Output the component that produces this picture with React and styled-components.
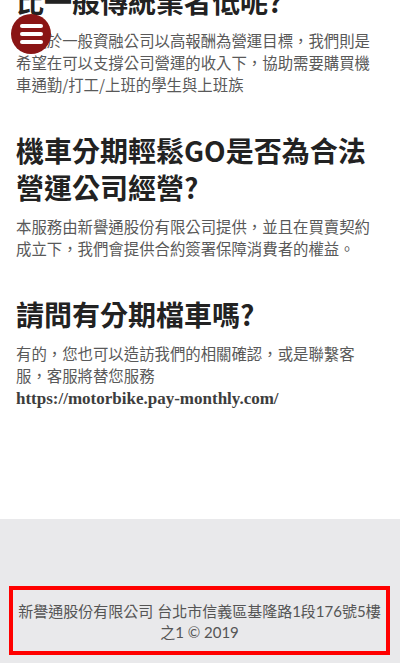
import React from 'react';
import styled, { createGlobalStyle } from 'styled-components';

const GlobalStyle = createGlobalStyle`
  html, body {
    margin: 0;
    padding: 0;
    background: #ffffff;
  }
  body {
    font-family: "Noto Sans CJK TC", "Noto Sans", sans-serif;
    overflow: hidden;
  }
`;

const faqs = [
  {
    title: '比一般傳統業者低呢?',
    body: '相較於一般資融公司以高報酬為營運目標，我們則是希望在可以支撐公司營運的收入下，協助需要購買機車通勤/打工/上班的學生與上班族',
  },
  {
    title: '機車分期輕鬆GO是否為合法營運公司經營?',
    body: '本服務由新譽通股份有限公司提供，並且在買賣契約成立下，我們會提供合約簽署保障消費者的權益。',
  },
  {
    title: '請問有分期檔車嗎?',
    body: '有的，您也可以造訪我們的相關確認，或是聯繫客服，客服將替您服務',
    link: 'https://motorbike.pay-monthly.com/',
  },
];

const App = () => {
  return (
    <>
      <GlobalStyle />
      <Page>
        <MenuButton aria-label="menu">
          <Bar />
          <Bar />
          <Bar />
        </MenuButton>
        <Main>
          {faqs.map((item, i) => (
            <Section key={i} first={i === 0}>
              <Title>{item.title}</Title>
              <Text>
                {item.body}
                {item.link && (
                  <>
                    <br />
                    <LinkText href={item.link}>{item.link}</LinkText>
                  </>
                )}
              </Text>
            </Section>
          ))}
        </Main>
        <Footer>
          <FooterBox>新譽通股份有限公司 台北市信義區基隆路1段176號5樓之1 © 2019</FooterBox>
        </Footer>
      </Page>
    </>
  );
};

export default App;

const Page = styled.div`
  min-height: 100vh;
  display: flex;
  flex-direction: column;
`;

const MenuButton = styled.button`
  position: fixed;
  left: 11px;
  top: 14px;
  width: 40px;
  height: 40px;
  padding: 0;
  border: none;
  border-radius: 50%;
  background: #8a1515;
  display: flex;
  flex-direction: column;
  align-items: center;
  justify-content: center;
  gap: 4px;
  cursor: pointer;
  z-index: 10;
`;

const Bar = styled.span`
  display: block;
  width: 23px;
  height: 4px;
  border-radius: 2px;
  background: #ffffff;
`;

const Main = styled.main`
  margin-top: -17px;
  padding: 0 17px 109px 16px;
`;

const Section = styled.section`
  margin-top: ${(p) => (p.first ? '0' : '37px')};
`;

const Title = styled.h2`
  margin: 0;
  font-size: 28px;
  line-height: 37px;
  font-weight: 700;
  color: #222222;
`;

const Text = styled.p`
  margin: 9px 0 0;
  font-size: 15.4px;
  line-height: 22px;
  color: #595959;
`;

const LinkText = styled.a`
  font-family: "Liberation Serif", "DejaVu Serif", serif;
  font-weight: 700;
  font-size: 17px;
  color: #3d3d3d;
  text-decoration: none;
`;

const Footer = styled.footer`
  flex: 1;
  background: #e9e9eb;
  padding: 67px 10px 10px 9px;
`;

const FooterBox = styled.div`
  border: 4px solid #ff0000;
  padding: 11px 2px 8px;
  text-align: center;
  font-family: "Lato", "Noto Sans CJK TC", sans-serif;
  font-size: 15px;
  line-height: 21px;
  color: #555555;
`;
